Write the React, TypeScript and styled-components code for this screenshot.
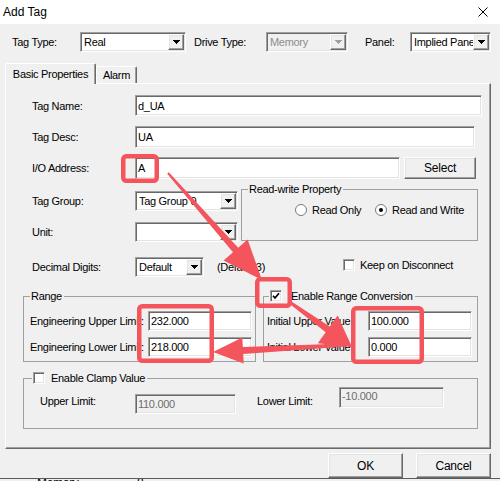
import styled, { createGlobalStyle, css } from "styled-components";

const GlobalStyle = createGlobalStyle`
  html, body {
    margin: 0;
    padding: 0;
  }
  body {
    background: #f0f0f0;
    font-family: "Liberation Sans", Arial, sans-serif;
    font-size: 11px;
    color: #000;
  }
`;

const RED = "#f4545c";

const sunken = css`
  box-sizing: border-box;
  border: 1px solid;
  border-color: #a0a0a0 #fff #fff #a0a0a0;
  box-shadow: inset 1px 1px 0 #696969, inset -1px -1px 0 #e3e3e3;
`;

const raised = css`
  box-sizing: border-box;
  border: 1px solid;
  border-color: #fff #696969 #696969 #fff;
  box-shadow: inset -1px -1px 0 #a0a0a0, inset 1px 1px 0 #e3e3e3;
`;

const Window = styled.div`
  position: relative;
  width: 500px;
  height: 481px;
  overflow: hidden;
  background: #f0f0f0;
  letter-spacing: -0.3px;
  white-space: nowrap;
`;

const TitleBar = styled.div`
  height: 24px;
  background: #fff;
  display: flex;
  align-items: center;
  justify-content: space-between;
  padding: 0 12px 0 3px;
  font-size: 12px;
  letter-spacing: 0;
`;

const TopBar = styled.div`
  display: flex;
  align-items: center;
  height: 20px;
  margin-top: 8px;
  padding-left: 12px;
`;

const Caption = styled.span<{ $w?: number; $ml?: number; $mt?: number }>`
  display: block;
  flex-shrink: 0;
  width: ${(p) => (p.$w ? `${p.$w}px` : "auto")};
  margin-left: ${(p) => p.$ml ?? 0}px;
  margin-top: ${(p) => p.$mt ?? 0}px;
  line-height: 14px;
`;

const ComboBox = styled.div<{ $w: number; $disabled?: boolean }>`
  ${sunken};
  width: ${(p) => p.$w}px;
  height: 20px;
  flex-shrink: 0;
  display: flex;
  align-items: center;
  background: ${(p) => (p.$disabled ? "#f0f0f0" : "#fff")};
  color: ${(p) => (p.$disabled ? "#8d8d8d" : "#000")};
`;

const ComboText = styled.span`
  flex: 1;
  overflow: hidden;
  padding-left: 3px;
`;

const ComboButton = styled.span`
  ${raised};
  width: 16px;
  height: 16px;
  margin-right: 1px;
  flex-shrink: 0;
  display: flex;
  align-items: center;
  justify-content: center;
  background: #f0f0f0;
`;

const TabStrip = styled.div`
  display: flex;
  align-items: flex-end;
  height: 20px;
  margin-top: 11px;
  padding-left: 5px;
`;

const Tab = styled.div<{ $active?: boolean; $w: number }>`
  box-sizing: border-box;
  position: relative;
  z-index: ${(p) => (p.$active ? 1 : 0)};
  width: ${(p) => p.$w}px;
  height: ${(p) => (p.$active ? 21 : 17)}px;
  margin-bottom: ${(p) => (p.$active ? -1 : 0)}px;
  background: #f0f0f0;
  border: 1px solid;
  border-bottom: none;
  border-color: #fff #696969 transparent #fff;
  box-shadow: inset -1px 0 0 #a0a0a0;
  border-radius: 2px 2px 0 0;
  display: flex;
  align-items: center;
  justify-content: center;
`;

const TabPanel = styled.div`
  box-sizing: border-box;
  width: 486px;
  height: 366px;
  margin-left: 5px;
  border: 1px solid;
  border-color: #fff #696969 #696969 #fff;
  box-shadow: inset -1px -1px 0 #a0a0a0;
  padding: 11px 12px 0 17px;
  display: flex;
  flex-direction: column;
`;

const FieldRow = styled.div<{ $mt?: number; $h: number; $pl?: number }>`
  display: flex;
  align-items: center;
  height: ${(p) => p.$h}px;
  margin-top: ${(p) => p.$mt ?? 0}px;
  padding-left: ${(p) => p.$pl ?? 0}px;
`;

const FieldLabel = styled.span<{ $w?: number }>`
  flex-shrink: 0;
  width: ${(p) => p.$w ?? 103}px;
`;

const TextBox = styled.div<{ $w: number; $h: number; $disabled?: boolean; $top?: boolean; $mt?: number }>`
  ${sunken};
  width: ${(p) => p.$w}px;
  height: ${(p) => p.$h}px;
  margin-top: ${(p) => p.$mt ?? 0}px;
  flex-shrink: 0;
  display: flex;
  align-items: ${(p) => (p.$top ? "flex-start" : "center")};
  padding: ${(p) => (p.$top ? "2px 0 0 2px" : "0 0 0 2px")};
  overflow: hidden;
  background: ${(p) => (p.$disabled ? "#f0f0f0" : "#fff")};
  color: ${(p) => (p.$disabled ? "#6d6d6d" : "#000")};
`;

const PushButton = styled.div<{ $w: number; $h: number; $ml?: number }>`
  ${raised};
  width: ${(p) => p.$w}px;
  height: ${(p) => p.$h}px;
  margin-left: ${(p) => p.$ml ?? 0}px;
  flex-shrink: 0;
  display: flex;
  align-items: center;
  justify-content: center;
  background: #f0f0f0;
  font-size: 12px;
  letter-spacing: -0.2px;
`;

const MidSection = styled.div`
  display: flex;
  margin-top: 4px;
`;

const LeftColumn = styled.div`
  width: 218px;
  flex-shrink: 0;
  display: flex;
  flex-direction: column;
  padding-left: 9px;
  box-sizing: border-box;
`;

const RightColumn = styled.div`
  display: flex;
  flex-direction: column;
`;

const GroupBox = styled.fieldset<{ $w: number }>`
  box-sizing: border-box;
  width: ${(p) => p.$w}px;
  min-width: 0;
  margin: 0;
  padding: 0;
  border: 1px solid #a0a0a0;
`;

const GroupTitle = styled.legend<{ $ml: number }>`
  margin-left: ${(p) => p.$ml}px;
  padding: 0 2px 0 1px;
  height: 12px;
  line-height: 12px;
`;

const TitleInner = styled.span<{ $gap?: number }>`
  display: flex;
  align-items: center;
  gap: ${(p) => p.$gap ?? 0}px;
  height: 12px;
`;

const GroupBody = styled.div<{ $pad: string; $row?: boolean }>`
  padding: ${(p) => p.$pad};
  display: flex;
  flex-direction: ${(p) => (p.$row ? "row" : "column")};
  align-items: flex-start;
`;

const RadioRow = styled.div`
  display: flex;
  align-items: center;
  height: 14px;
`;

const Radio = styled.span<{ $checked?: boolean }>`
  box-sizing: border-box;
  width: 12px;
  height: 12px;
  flex-shrink: 0;
  border-radius: 50%;
  border: 1px solid #7a7a7a;
  background: #fff;
  display: flex;
  align-items: center;
  justify-content: center;
  &::after {
    content: "";
    width: 4px;
    height: 4px;
    border-radius: 50%;
    background: ${(p) => (p.$checked ? "#000" : "transparent")};
  }
`;

const OptionLabel = styled.span<{ $w?: number }>`
  margin-left: 5px;
  width: ${(p) => (p.$w ? `${p.$w}px` : "auto")};
`;

const CheckRow = styled.div<{ $mt: number; $pl: number }>`
  display: flex;
  align-items: center;
  gap: 5px;
  height: 12px;
  margin-top: ${(p) => p.$mt}px;
  padding-left: ${(p) => p.$pl}px;
`;

const CheckBox = styled.span`
  ${sunken};
  width: 12px;
  height: 12px;
  flex-shrink: 0;
  background: #fff;
  display: flex;
  align-items: center;
  justify-content: center;
`;

const RangeRow = styled.div`
  display: flex;
  gap: 7px;
  margin-top: 13px;
`;

const ClampGroup = styled(GroupBox)`
  margin-top: 10px;
`;

const ButtonBar = styled.div`
  display: flex;
  justify-content: flex-end;
  gap: 13px;
  height: 25px;
  margin-top: 4px;
  padding-right: 9px;
`;

const BackStrip = styled.div`
  height: 2px;
  border-top: 1px solid #5a5a5a;
  overflow: hidden;
  display: flex;
  padding-left: 37px;
  line-height: 11px;
`;

const BackText = styled.span<{ $w?: number }>`
  width: ${(p) => (p.$w ? `${p.$w}px` : "auto")};
  margin-top: -1px;
  font-size: 12px;
`;

const Overlay = styled.svg`
  position: absolute;
  left: 0;
  top: 0;
  pointer-events: none;
`;

function DropArrow({ disabled }: { disabled?: boolean }) {
  return (
    <svg width="7" height="4" viewBox="0 0 7 4" shapeRendering="crispEdges">
      <path d="M0 0h7v1H0zM1 1h5v1H1zM2 2h3v1H2zM3 3h1v1H3z" fill={disabled ? "#a0a0a0" : "#000"} />
    </svg>
  );
}

function Combo({ width, value, disabled }: { width: number; value?: string; disabled?: boolean }) {
  return (
    <ComboBox $w={width} $disabled={disabled}>
      <ComboText>{value}</ComboText>
      <ComboButton>
        <DropArrow disabled={disabled} />
      </ComboButton>
    </ComboBox>
  );
}

function Check({ checked }: { checked?: boolean }) {
  return (
    <CheckBox>
      {checked && (
        <svg width="8" height="8" viewBox="0 0 8 8">
          <path d="M1 3.8l2 2.2L7 1.2" fill="none" stroke="#000" strokeWidth="1.7" />
        </svg>
      )}
    </CheckBox>
  );
}

function CloseIcon() {
  return (
    <svg width="10" height="10" viewBox="0 0 10 10">
      <path d="M0.5 0.5L9.5 9.5M9.5 0.5L0.5 9.5" stroke="#000" strokeWidth="1" />
    </svg>
  );
}

// red callouts drawn over the dialog
function Annotations() {
  return (
    <Overlay width="500" height="481" viewBox="0 0 500 481">
      <g fill="none" stroke={RED} strokeWidth="4.5">
        <rect x="123.25" y="156.25" width="33.5" height="24.5" rx="3" />
        <rect x="257.25" y="279.25" width="32.5" height="26.5" rx="3" />
        <rect x="139.25" y="306.25" width="72.5" height="54.5" rx="3" />
        <rect x="353.25" y="308.25" width="68.5" height="53.5" rx="3" />
      </g>
      <g fill={RED}>
        <polygon points="168.8,172.3 238.2,247.7 247.6,239.4 262,280 223.6,260.6 233,252.3 167.2,173.7" />
        <polygon points="291.9,301.8 329.7,326.6 337.6,315.6 352,347 317.8,343.2 325.7,332.2 290.1,304.2" />
        <polygon points="346.1,346.5 243.2,353.9 243.7,363.4 213,352 242.3,337.4 242.8,346.9 345.9,343.5" />
      </g>
    </Overlay>
  );
}

export default function App() {
  return (
    <>
      <GlobalStyle />
      <Window>
        <TitleBar>
          <span>Add Tag</span>
          <CloseIcon />
        </TitleBar>

        <TopBar>
          <Caption $w={68}>Tag Type:</Caption>
          <Combo width={106} value="Real" />
          <Caption $w={72} $ml={8}>Drive Type:</Caption>
          <Combo width={82} value="Memory" disabled />
          <Caption $w={45} $ml={17}>Panel:</Caption>
          <Combo width={81} value="Implied Panel" />
        </TopBar>

        <TabStrip>
          <Tab $active $w={91}>Basic Properties</Tab>
          <Tab $w={41}>Alarm</Tab>
        </TabStrip>

        <TabPanel>
          <FieldRow $h={21} $pl={9}>
            <FieldLabel>Tag Name:</FieldLabel>
            <TextBox $w={347} $h={21}>d_UA</TextBox>
          </FieldRow>
          <FieldRow $h={22} $mt={10} $pl={9}>
            <FieldLabel>Tag Desc:</FieldLabel>
            <TextBox $w={340} $h={22}>UA</TextBox>
          </FieldRow>
          <FieldRow $h={22} $mt={9} $pl={9}>
            <FieldLabel>I/O Address:</FieldLabel>
            <TextBox $w={265} $h={22}>A</TextBox>
            <PushButton $w={72} $h={22} $ml={4}>Select</PushButton>
          </FieldRow>

          <MidSection>
            <LeftColumn>
              <FieldRow $h={20} $mt={8}>
                <FieldLabel>Tag Group:</FieldLabel>
                <Combo width={103} value="Tag Group 0" />
              </FieldRow>
              <FieldRow $h={20} $mt={11}>
                <FieldLabel>Unit:</FieldLabel>
                <Combo width={103} />
              </FieldRow>
              <FieldRow $h={20} $mt={15}>
                <FieldLabel>Decimal Digits:</FieldLabel>
                <Combo width={69} value="Default" />
                <Caption $ml={13}>(Default:3)</Caption>
              </FieldRow>
            </LeftColumn>

            <RightColumn>
              <GroupBox $w={237}>
                <GroupTitle $ml={6}>Read-write Property</GroupTitle>
                <GroupBody $pad="8px 0 23px 53px">
                  <RadioRow>
                    <Radio />
                    <OptionLabel $w={63}>Read Only</OptionLabel>
                    <Radio $checked />
                    <OptionLabel>Read and Write</OptionLabel>
                  </RadioRow>
                </GroupBody>
              </GroupBox>
              <CheckRow $mt={18} $pl={102}>
                <Check />
                <span>Keep on Disconnect</span>
              </CheckRow>
            </RightColumn>
          </MidSection>

          <RangeRow>
            <GroupBox $w={233}>
              <GroupTitle $ml={6}>Range</GroupTitle>
              <GroupBody $pad="9px 0 4px 6px">
                <FieldRow $h={20}>
                  <FieldLabel $w={118}>Engineering Upper Limit:</FieldLabel>
                  <TextBox $w={104} $h={20}>232.000</TextBox>
                </FieldRow>
                <FieldRow $h={20} $mt={6}>
                  <FieldLabel $w={118}>Engineering Lower Limit:</FieldLabel>
                  <TextBox $w={104} $h={20}>218.000</TextBox>
                </FieldRow>
              </GroupBody>
            </GroupBox>

            <GroupBox $w={215}>
              <GroupTitle $ml={5}>
                <TitleInner $gap={9}>
                  <Check checked />
                  <span>Enable Range Conversion</span>
                </TitleInner>
              </GroupTitle>
              <GroupBody $pad="9px 0 4px 3px">
                <FieldRow $h={20}>
                  <FieldLabel $w={101}>Initial Upper Value</FieldLabel>
                  <TextBox $w={104} $h={20}>100.000</TextBox>
                </FieldRow>
                <FieldRow $h={20} $mt={6}>
                  <FieldLabel $w={101}>Initial Lower Value</FieldLabel>
                  <TextBox $w={104} $h={20}>0.000</TextBox>
                </FieldRow>
              </GroupBody>
            </GroupBox>
          </RangeRow>

          <ClampGroup $w={455}>
            <GroupTitle $ml={8}>
              <TitleInner $gap={6}>
                <Check />
                <span>Enable Clamp Value</span>
              </TitleInner>
            </GroupTitle>
            <GroupBody $row $pad="3px 0 14px 16px">
              <Caption $w={95} $mt={7}>Upper Limit:</Caption>
              <TextBox $w={101} $h={20} $mt={7} $disabled>110.000</TextBox>
              <Caption $w={82} $ml={21} $mt={7}>Lower Limit:</Caption>
              <TextBox $w={105} $h={21} $disabled $top>-10.000</TextBox>
            </GroupBody>
          </ClampGroup>
        </TabPanel>

        <ButtonBar>
          <PushButton $w={75} $h={25}>OK</PushButton>
          <PushButton $w={75} $h={25}>Cancel</PushButton>
        </ButtonBar>

        <BackStrip>
          <BackText $w={100}>Memory</BackText>
          <BackText>8</BackText>
        </BackStrip>

        <Annotations />
      </Window>
    </>
  );
}
